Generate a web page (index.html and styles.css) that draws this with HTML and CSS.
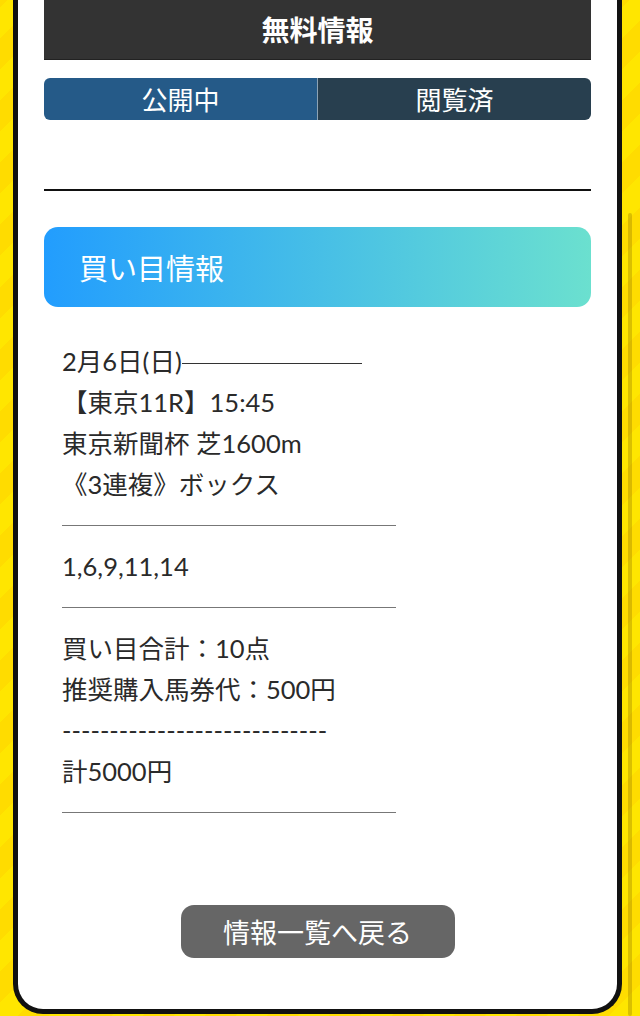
FILE: index.html
```html
<!DOCTYPE html>
<html lang="ja">
<head>
  <meta charset="UTF-8">
  <title>無料情報</title>
  <link rel="stylesheet" href="styles.css">
</head>
<body>

  <div class="card">
    <h2 class="page-title">無料情報</h2>

    <div class="tabs">
      <div class="tab tab-open">公開中</div>
      <div class="tab tab-read">閲覧済</div>
    </div>

    <div class="divider"></div>

    <div class="info-head">買い目情報</div>

    <div class="info-body">
      <div class="row">2月6日(日)<span class="dash"></span></div>
      <div class="row">【東京11R】15:45</div>
      <div class="row">東京新聞杯 芝1600m</div>
      <div class="row">《3連複》ボックス</div>
      <div class="row rule"></div>
      <div class="row">1,6,9,11,14</div>
      <div class="row rule"></div>
      <div class="row">買い目合計：10点</div>
      <div class="row">推奨購入馬券代：500円</div>
      <div class="row">----------------------------</div>
      <div class="row">計5000円</div>
      <div class="row rule"></div>
    </div>

    <div class="back-wrap">
      <button class="back-btn">情報一覧へ戻る</button>
    </div>
  </div>

  <div class="scroll-thumb"></div>

</body>
</html>
```

FILE: styles.css
```css
body {
  margin: 0;
  height: 1016px;
  overflow: hidden;
  background: repeating-linear-gradient(-45deg, #ffe600 0, #ffe600 22px, #ffdc00 22px, #ffdc00 44px);
  font-family: "Lato", "Noto Sans CJK JP", sans-serif;
  color: #2a2a2a;
}
.card {
  box-sizing: border-box;
  margin: 0 18px 0 13px;
  height: 1014px;
  background-color: #fff;
  border: 5px solid #111;
  border-top: none;
  border-radius: 0 0 30px 30px;
  padding: 0 26px;
}
.page-title {
  margin: 0;
  height: 60px;
  line-height: 58px;
  background-color: #333;
  color: #fff;
  text-align: center;
  font-family: "Noto Sans CJK JP", sans-serif;
  font-weight: 700;
  font-size: 28px;
  border-bottom: 1px solid #222;
  box-sizing: border-box;
}
.tabs {
  display: flex;
  margin-top: 18px;
  height: 42px;
  border-radius: 6px;
  overflow: hidden;
}
.tab {
  flex: 1;
  color: #fff;
  text-align: center;
  font-family: "Noto Sans CJK JP", sans-serif;
  font-size: 26px;
  line-height: 42px;
}
.tab-open {
  background-color: #255a88;
  border-right: 1px solid #8da3b5;
}
.tab-read {
  background-color: #283f4f;
}
.divider {
  margin-top: 69px;
  height: 2px;
  background-color: #111;
}
.info-head {
  margin-top: 36px;
  height: 80px;
  border-radius: 14px;
  background: linear-gradient(to right, #229dfe, #6be0cf);
  color: #fff;
  font-family: "Noto Sans CJK JP", sans-serif;
  font-size: 29px;
  line-height: 80px;
  padding-left: 35px;
}
.info-body {
  margin-top: 34px;
  padding-left: 18px;
  font-size: 25.5px;
}
.row {
  height: 41px;
  line-height: 41px;
  white-space: nowrap;
  display: flex;
  align-items: center;
}
.dash {
  display: inline-block;
  width: 180px;
  height: 1px;
  margin-top: 4px;
  background-color: #333;
}
.rule::before {
  content: "";
  width: 334px;
  height: 1.5px;
  background-color: #777;
}
.back-wrap {
  margin-top: 72px;
  text-align: center;
}
.back-btn {
  width: 274px;
  height: 53px;
  border: none;
  border-radius: 13px;
  background-color: #666;
  color: #fff;
  font-family: "Noto Sans CJK JP", sans-serif;
  font-size: 27px;
  padding: 0;
  cursor: pointer;
}
.scroll-thumb {
  position: absolute;
  top: 213px;
  left: 628px;
  width: 4px;
  height: 803px;
  border-radius: 2px;
  background-color: rgba(150, 120, 0, 0.35);
}
```
